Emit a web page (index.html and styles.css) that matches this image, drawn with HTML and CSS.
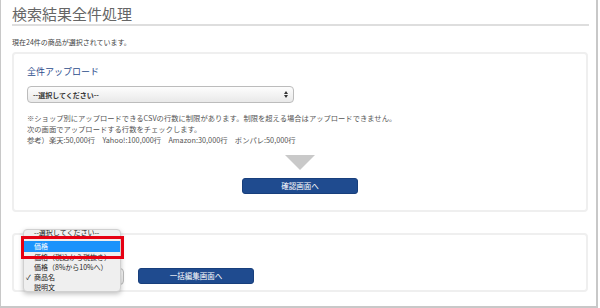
FILE: index.html
```html
<!DOCTYPE html>
<html lang="ja">
<head>
    <meta charset="UTF-8">
    <meta name="viewport" content="width=device-width, initial-scale=1.0">
    <title>検索結果全件処理</title>
    <link rel="stylesheet" href="styles.css">
</head>
<body>
    <div class="page">
        <h1 class="page-title">検索結果全件処理</h1>
        <p class="lead">現在24件の商品が選択されています。</p>

        <div class="card card-upload">
            <h2 class="card-title">全件アップロード</h2>
            <div class="select select-wide">
                <span>--選択してください--</span>
                <svg class="select-arrow" width="4" height="7" viewBox="0 0 4 7"><path d="M0 3 L2 0 L4 3 Z M0 4 L2 7 L4 4 Z" fill="#333"/></svg>
            </div>
            <div class="notes">
                <p>※ショップ別にアップロードできるCSVの行数に制限があります。制限を超える場合はアップロードできません。</p>
                <p>次の画面でアップロードする行数をチェックします。</p>
                <p>参考）楽天:50,000行　Yahoo!:100,000行　Amazon:30,000行　ポンパレ:50,000行</p>
            </div>
            <div class="arrow-down"></div>
            <button class="btn btn-center">確認画面へ</button>
        </div>

        <div class="card card-edit">
            <div class="edit-row">
                <div class="select select-short">
                    <span>商品名</span>
                    <svg class="select-arrow" width="4" height="7" viewBox="0 0 4 7"><path d="M0 3 L2 0 L4 3 Z M0 4 L2 7 L4 4 Z" fill="#333"/></svg>
                </div>
                <button class="btn">一括編集画面へ</button>
            </div>
        </div>

        <!-- 開いているプルダウン -->
        <div class="popup">
            <div class="popup-item popup-first">--選択してください--</div>
            <div class="popup-item popup-active">価格</div>
            <div class="popup-item">価格（税込から税抜き）</div>
            <div class="popup-item">価格（8%から10%へ）</div>
            <div class="popup-item"><span class="check">✓</span>商品名</div>
            <div class="popup-item">説明文</div>
        </div>
        <div class="highlight-box"></div>
    </div>
</body>
</html>
```

FILE: styles.css
```css
body {
    margin: 0;
    padding: 0;
    background-color: #fff;
    font-family: "Noto Sans CJK JP", sans-serif;
    color: #444;
}
p {
    margin: 0;
}
.page {
    position: relative;
    box-sizing: border-box;
    width: 598px;
    height: 308px;
    padding: 0 7px 0 11px;
    border-left: 1px solid #c8c8c8;
    border-right: 2px solid #c8c8c8;
    border-bottom: 2px solid #c8c8c8;
    overflow: hidden;
}
.page-title {
    margin: 0;
    padding-top: 4px;
    font-size: 15px;
    line-height: 20px;
    font-weight: normal;
    color: #666;
    border-bottom: 2px solid #dedede;
}
.lead {
    margin-top: 11px;
    font-size: 7px;
    line-height: 10px;
    color: #444;
}
.card {
    margin-top: 5px;
    margin-right: 1px;
    border: 2px solid #efefef;
    border-radius: 4px;
    background-color: #fff;
}
.card-upload {
    padding: 12px 13px 16px;
}
.card-edit {
    margin-top: 21px;
    padding: 33px 13px 5px;
}
.card-title {
    margin: 0;
    font-size: 9px;
    line-height: 12px;
    font-weight: normal;
    color: #2b4c8c;
}
.select {
    box-sizing: border-box;
    height: 17px;
    display: flex;
    align-items: center;
    justify-content: space-between;
    padding: 0 5px;
    border: 1px solid #bcbcbc;
    border-radius: 4px;
    background: linear-gradient(#fdfdfd, #e9e9e9);
    font-size: 7px;
    font-weight: bold;
    color: #333;
}
.select-wide {
    margin-top: 8px;
    width: 267px;
}
.select-short {
    width: 97px;
}
.notes {
    margin-top: 10px;
    font-size: 7.3px;
    line-height: 11px;
    color: #555;
}
.arrow-down {
    width: 0;
    height: 0;
    margin: 9px auto 0;
    border-left: 15px solid transparent;
    border-right: 15px solid transparent;
    border-top: 15px solid #c9c9c9;
}
.btn {
    box-sizing: border-box;
    width: 116px;
    height: 16px;
    padding: 0;
    border: 1px solid #183f7c;
    border-radius: 3px;
    background-color: #1f4b8f;
    color: #fff;
    font-family: "Noto Sans CJK JP", sans-serif;
    font-size: 7.5px;
    line-height: 14px;
}
.btn-center {
    display: block;
    margin: 8px auto 0;
}
.edit-row {
    display: flex;
    align-items: flex-start;
    gap: 14px;
}
.popup {
    position: absolute;
    left: 22px;
    top: 229px;
    width: 98px;
    height: 63px;
    box-sizing: border-box;
    background-color: #efefef;
    border: 1px solid #d0d0d0;
    border-radius: 4px;
    box-shadow: 0 2px 5px rgba(0,0,0,0.25);
    overflow: hidden;
    font-size: 7px;
    color: #222;
}
.popup-item {
    height: 10px;
    line-height: 10px;
    padding-left: 10px;
    white-space: nowrap;
}
.popup-first {
    margin-top: -3px;
    margin-bottom: 4.3px;
}
.popup-active {
    height: 11px;
    line-height: 11px;
    background-color: #1b93fb;
    color: #fff;
}
.check {
    display: inline-block;
    width: 8px;
    margin-left: -8px;
}
.highlight-box {
    position: absolute;
    left: 20px;
    top: 236px;
    width: 103px;
    height: 23px;
    box-sizing: border-box;
    border: 3px solid #e60012;
}
```
